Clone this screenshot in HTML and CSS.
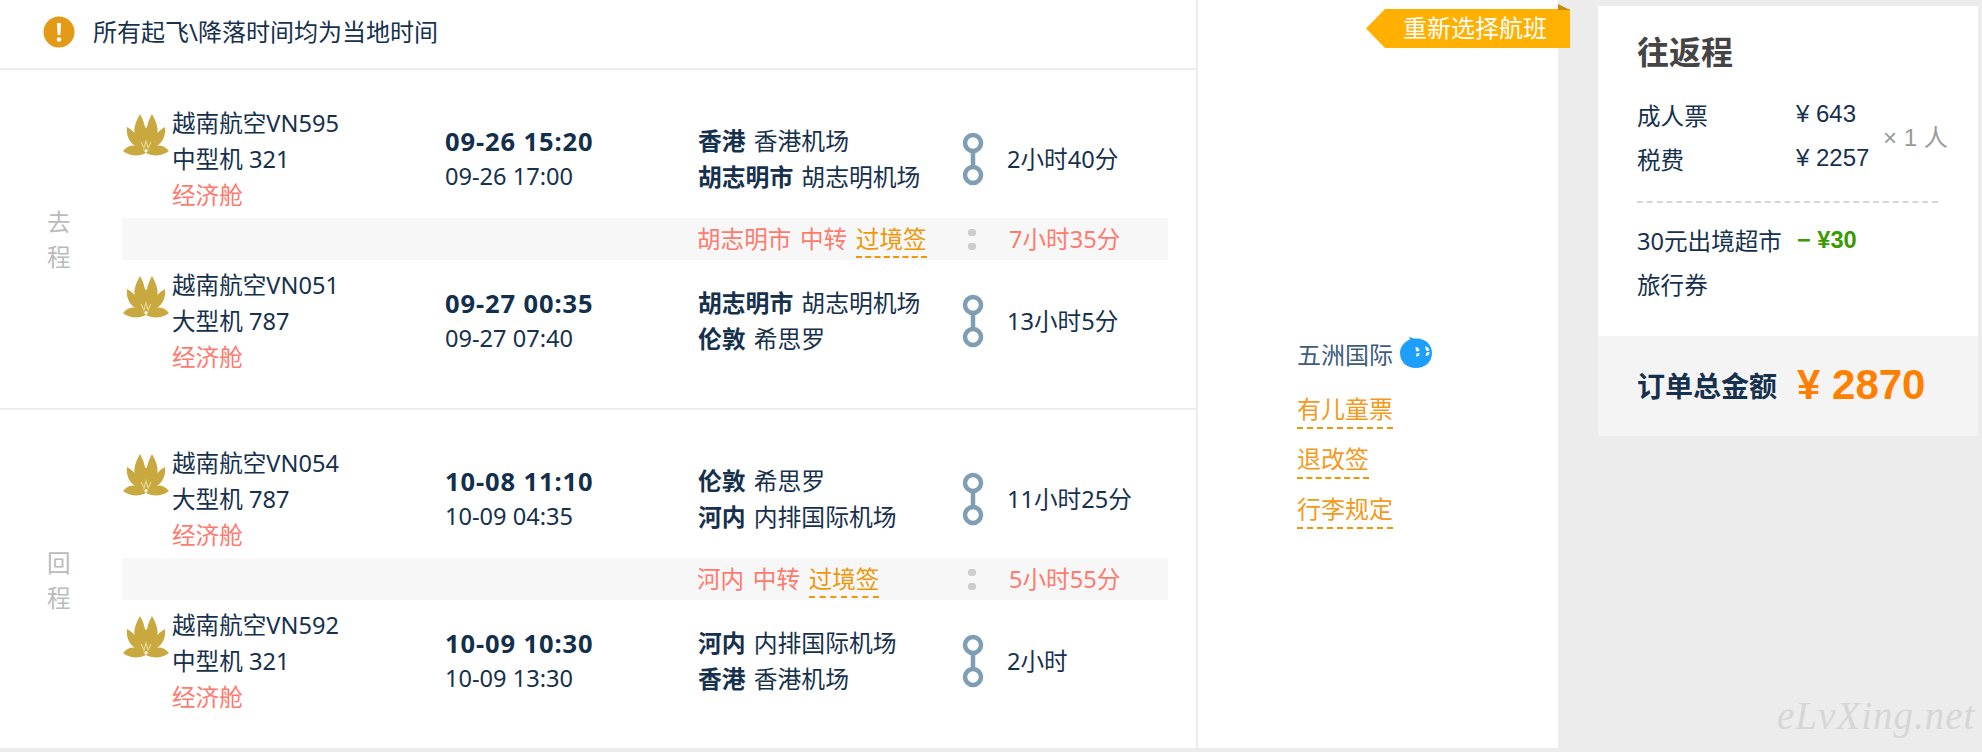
FILE: index.html
```html
<!DOCTYPE html>
<html lang="zh">
<head>
<meta charset="utf-8">
<title>订单</title>
<link rel="stylesheet" href="styles.css">
</head>
<body>
<svg class="defs" width="0" height="0">
  <symbol id="lotus" viewBox="0 0 46 44">
    <g fill="#c9a93f">
      <path d="M17 1C13 8 10 15 12 23C13 30 18 34 22 38C25 26 23 11 17 1Z"/>
      <path d="M29 1C33 8 36 15 34 23C33 30 28 34 24 38C21 26 23 11 29 1Z"/>
      <path d="M18 20L23 14L28 20L28 36L18 36Z"/>
      <path d="M4 14C3 22 6 29 12 33C15 35 19 36 21 38C19 28 13 19 4 14Z"/>
      <path d="M42 14C43 22 40 29 34 33C31 35 27 36 25 38C27 28 33 19 42 14Z"/>
      <path d="M0 38C7 30 16 31 23 40C16 44 6 43 0 38Z"/>
      <path d="M46 38C39 30 30 31 23 40C30 44 40 43 46 38Z"/>
    </g>
    <path d="M18 29L21 35L23 28L25 35L28 29" fill="none" stroke="#e6d48f" stroke-width="1.2"/>
  </symbol>
  <symbol id="route" viewBox="0 0 22 54">
    <g fill="none" stroke="#7f9db3" stroke-width="4.500">
      <circle cx="11" cy="11" r="8"/>
      <circle cx="11" cy="43" r="8"/>
      <path d="M11 19V35"/>
    </g>
  </symbol>
</svg>
<div class="page">
  <main class="main">
    <div class="content">
      <div class="flights">
        <div class="notice">
          <svg class="notice-icon" viewBox="0 0 32 32"><circle cx="16" cy="16" r="15.5" fill="#e39a16"/><path d="M14 7h4l-.6 12h-2.800z" fill="#fff"/><circle cx="16" cy="23.5" r="2.200" fill="#fff"/></svg>
          <span>所有起飞\降落时间均为当地时间</span>
        </div>

        <section class="leg">
          <div class="leg-label"><span>去</span><span>程</span></div>
          <div class="leg-body">
            <div class="row">
              <div class="airline"><svg class="lotus"><use href="#lotus"/></svg><div><div>越南航空VN595</div><div>中型机 321</div><div class="red">经济舱</div></div></div>
              <div class="times"><div class="dep">09-26 15:20</div><div class="arr">09-26 17:00</div></div>
              <div class="cities"><div><b>香港</b> 香港机场</div><div><b>胡志明市</b> 胡志明机场</div></div>
              <svg class="route"><use href="#route"/></svg>
              <div>2小时40分</div>
            </div>
            <div class="transfer">
              <div class="cities red transfer-city">胡志明市 中转 <span class="visa">过境签</span></div>
              <div class="dots"><i></i><i></i></div>
              <div class="red wait">7小时35分</div>
            </div>
            <div class="row">
              <div class="airline"><svg class="lotus"><use href="#lotus"/></svg><div><div>越南航空VN051</div><div>大型机 787</div><div class="red">经济舱</div></div></div>
              <div class="times"><div class="dep">09-27 00:35</div><div class="arr">09-27 07:40</div></div>
              <div class="cities"><div><b>胡志明市</b> 胡志明机场</div><div><b>伦敦</b> 希思罗</div></div>
              <svg class="route"><use href="#route"/></svg>
              <div>13小时5分</div>
            </div>
          </div>
        </section>

        <section class="leg">
          <div class="leg-label"><span>回</span><span>程</span></div>
          <div class="leg-body">
            <div class="row">
              <div class="airline"><svg class="lotus"><use href="#lotus"/></svg><div><div>越南航空VN054</div><div>大型机 787</div><div class="red">经济舱</div></div></div>
              <div class="times"><div class="dep">10-08 11:10</div><div class="arr">10-09 04:35</div></div>
              <div class="cities"><div><b>伦敦</b> 希思罗</div><div><b>河内</b> 内排国际机场</div></div>
              <svg class="route"><use href="#route"/></svg>
              <div>11小时25分</div>
            </div>
            <div class="transfer">
              <div class="cities red transfer-city">河内 中转 <span class="visa">过境签</span></div>
              <div class="dots"><i></i><i></i></div>
              <div class="red wait">5小时55分</div>
            </div>
            <div class="row">
              <div class="airline"><svg class="lotus"><use href="#lotus"/></svg><div><div>越南航空VN592</div><div>中型机 321</div><div class="red">经济舱</div></div></div>
              <div class="times"><div class="dep">10-09 10:30</div><div class="arr">10-09 13:30</div></div>
              <div class="cities"><div><b>河内</b> 内排国际机场</div><div><b>香港</b> 香港机场</div></div>
              <svg class="route"><use href="#route"/></svg>
              <div>2小时</div>
            </div>
          </div>
        </section>
      </div>

      <aside class="agent">
        <div class="agent-name">五洲国际
          <svg class="bubble" viewBox="0 0 32 32"><path d="M9 0.500C11 2 13 2.500 16.500 2.500C26 2.500 32 9 32 17C32 26 25 32 16 32C7 32 0 26 0 17C0 11 4 6 10 3.500Z" fill="#1e9fff"/><path d="M15.500 11q3.500 0 4 3.500q-1.500 1.500-3.500 .5zM16 20.500q3.500 .5 3.500-3.500l-3 .5zM25 10.500q3.500 0 4.500 3.500q-1.500 1.500-3.500 .5zM25.500 20q4 0 4-4l-3 .5z" fill="#fff"/></svg>
        </div>
        <a class="agent-link">有儿童票</a>
        <a class="agent-link">退改签</a>
        <a class="agent-link">行李规定</a>
      </aside>
    </div>
  </main>

  <aside class="side">
    <div class="card">
      <div class="card-top">
        <h2 class="card-title">往返程</h2>
        <div class="prices">
          <div class="price-list">
            <div class="price-row"><span class="price-name">成人票</span><span class="price-val">¥ 643</span></div>
            <div class="price-row"><span class="price-name">税费</span><span class="price-val">¥ 2257</span></div>
          </div>
          <div class="mult">× 1 人</div>
        </div>
        <div class="coupon">
          <div class="coupon-name">30元出境超市<br>旅行券</div>
          <div class="coupon-val">− ¥30</div>
        </div>
      </div>
      <div class="total">
        <span class="total-name">订单总金额</span>
        <span class="total-val">¥ 2870</span>
      </div>
    </div>
  </aside>

  <div class="ribbon">重新选择航班</div>
  <div class="ribbon-fold"></div>
  <div class="mark">eLvXing.net</div>
</div>
</body>
</html>
```
FILE: styles.css
```css
* { box-sizing: border-box; }
html, body { margin: 0; height: 752px; overflow: hidden; }
body {
  background: #ececec;
  color: #16314d;
  font-family: "Noto Sans", "Noto Sans CJK SC", sans-serif;
  font-size: 23.6px;
  line-height: 36px;
}
.defs { position: absolute; }
.page { display: flex; height: 752px; position: relative; }
.main { width: 1558px; height: 750px; background: #fff; border-bottom: 2px solid #ececec; }
.content { display: flex; height: 100%; }
.flights { width: 1198px; border-right: 2px solid #ececec; }

.notice {
  height: 70px;
  display: flex;
  align-items: flex-start;
  gap: 18px;
  padding: 14px 0 0 43px;
  border-bottom: 2px solid #ececec;
  font-size: 24px;
}
.notice-icon { width: 32px; height: 32px; margin-top: 2px; }

.leg { display: flex; height: 340px; border-bottom: 2px solid #ececec; padding: 35px 0 33px; }
.leg:last-child { border-bottom: 0; }
.leg-label {
  width: 122px;
  padding-left: 47px;
  display: flex;
  flex-direction: column;
  justify-content: center;
  line-height: 35px;
  color: #bbb;
}
.leg-body { width: 1046px; }
.row {
  display: grid;
  grid-template-columns: 323px 253px 264px 45px 1fr;
  align-items: center;
  height: 108px;
}
.airline { display: flex; align-items: flex-start; height: 108px; white-space: nowrap; }
.lotus { width: 46px; height: 44px; margin: 8px 3px 0 1px; flex: none; }
.red { color: #ff7a6e; }
.dep { font-weight: 700; font-size: 25.500px; letter-spacing: .9px; color: #122f4b; }
.times { line-height: 35px; }
.cities { white-space: nowrap; word-spacing: 2px; font-size: 23.800px; }
.cities b { font-weight: 700; }
.route { width: 22px; height: 54px; }

.transfer {
  display: grid;
  grid-template-columns: 264px 45px 1fr;
  align-items: center;
  height: 42px;
  margin: 5px 0 7px;
  padding-left: 576px;
  background: #f7f7f7;
}
.transfer-city { font-size: 23.600px; word-spacing: 2.500px; margin-left: -1px; }
.wait { padding-left: 2px; }
.visa { color: #ef9708; border-bottom: 2px dashed #ef9708; display: inline-block; line-height: 34px; height: 36px; }
.dots { display: flex; flex-direction: column; gap: 7px; padding-left: 6px; }
.dots i { width: 8px; height: 7px; border-radius: 3px; background: #cdcdcd; }

.agent { width: 360px; padding: 337px 0 0 99px; display: flex; flex-direction: column; align-items: flex-start; }
.agent-name { color: #3e5c7c; display: flex; align-items: center; gap: 7px; white-space: nowrap; height: 36px; font-size: 24px; }
.bubble { width: 32px; height: 32px; margin-top: -6px; }
.agent-link {
  color: #f39a1c;
  border-bottom: 2px dashed #ef9708;
  height: 39px;
  line-height: 38px;
  margin-bottom: 11px;
  font-size: 24px;
}
.agent-name + .agent-link { margin-top: 17px; }

.side { padding: 6px 0 0 40px; }
.card { width: 380px; background: #fff; }
.card-top { height: 330px; padding: 26px 0 0 39px; }
.card-title { margin: 0 0 22px; font-size: 32px; line-height: 40px; font-weight: 700; color: #444; }
.prices { display: flex; align-items: center; }
.price-row { display: flex; height: 44px; align-items: center; }
.price-name { width: 159px; }
.price-val { width: 87px; font-family: "Liberation Sans", sans-serif; font-size: 24px; margin-top: -4px; white-space: nowrap; }
.mult { color: #999; font-family: "Liberation Sans", "Noto Sans CJK SC", sans-serif; font-size: 24px; white-space: nowrap; }
.coupon { display: flex; margin-top: 19px; width: 301px; border-top: 2px dashed #d6d6d6; padding-top: 16px; }
.coupon-name { width: 160px; line-height: 44px; white-space: nowrap; }
.coupon-val { color: #3a9a00; font-weight: 700; font-family: "Liberation Sans", sans-serif; line-height: 42px; }
.total {
  height: 100px;
  background: #f4f4f4;
  display: flex;
  align-items: center;
  padding-left: 39px;
  white-space: nowrap;
}
.total-name { width: 160px; font-size: 28px; font-weight: 700; color: #16314d; }
.total-val { font-family: "Liberation Sans", sans-serif; font-size: 42px; font-weight: 700; color: #ff8000; margin-top: -2px; }

.ribbon {
  position: absolute;
  left: 1366px;
  top: 9px;
  width: 204px;
  height: 39px;
  background: #ffb000;
  color: #fff;
  font-size: 24px;
  line-height: 38px;
  padding-left: 37px;
  white-space: nowrap;
  clip-path: polygon(19px 0, 100% 0, 100% 100%, 19px 100%, 0 50%);
}
.ribbon-fold {
  position: absolute;
  left: 1558px;
  top: 4px;
  width: 12px;
  height: 6px;
  background: #c98a0c;
  clip-path: polygon(0 0, 100% 100%, 0 100%);
}
.mark {
  position: absolute;
  left: 1777px;
  top: 693px;
  font-family: "Liberation Serif", serif;
  font-style: italic;
  font-size: 39px;
  line-height: 46px;
  letter-spacing: 1px;
  color: #d6d6d6;
  white-space: nowrap;
}
```
